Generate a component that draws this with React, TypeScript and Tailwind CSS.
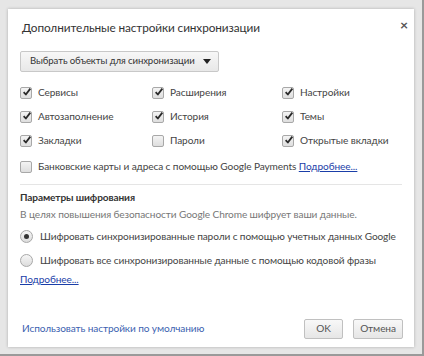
import type { ReactNode } from "react";

function Check({ on }: { on?: boolean }) {
  return (
    <span className="relative inline-flex h-[12px] w-[12px] shrink-0 items-center justify-center rounded-[2px] border border-[#a8a8a8] bg-gradient-to-b from-[#f4f4f4] to-[#dedede]">
      {on && (
        <svg viewBox="0 0 12 12" className="absolute -top-[1px] left-[1px] h-[10px] w-[10px]">
          <path d="M2 6.2 L4.6 9 L10 2" fill="none" stroke="#2a2a2a" strokeWidth="2.2" strokeLinejoin="round" />
        </svg>
      )}
    </span>
  );
}

function Item({ on, children }: { on?: boolean; children: ReactNode }) {
  return (
    <label className="flex items-center gap-[6px] whitespace-nowrap">
      <Check on={on} />
      <span>{children}</span>
    </label>
  );
}

function Radio({ on, children }: { on?: boolean; children: ReactNode }) {
  return (
    <label className="flex items-center gap-[7px] whitespace-nowrap">
      <span className="inline-flex h-[13px] w-[13px] shrink-0 items-center justify-center rounded-full border border-[#a8a8a8] bg-gradient-to-b from-[#f6f6f6] to-[#dcdcdc]">
        {on && <span className="h-[5px] w-[5px] rounded-full bg-[#333]" />}
      </span>
      <span>{children}</span>
    </label>
  );
}

export default function App() {
  return (
    <div
      className="h-[356px] w-[424px] border-r-2 border-b-2 border-[#9a9a9a] bg-[#e6e6e6] pl-[8px] pt-[9px] text-[10.1px] tracking-[-0.1px] text-[#444]"
      style={{ fontFamily: 'Lato, "Noto Sans", sans-serif' }}
    >
      <div className="relative flex h-[338px] w-[406px] flex-col bg-white pl-[12px] pr-[11px] shadow-[0_0_3px_rgba(0,0,0,0.25)]">
        <button className="absolute right-[6px] top-[5px] text-[14px] font-bold text-[#555]">×</button>
        <div className="pt-[11px] pl-[2px] text-[11.8px] leading-[16px] text-[#333]">Дополнительные настройки синхронизации</div>

        <div className="mt-[15px]">
          <button className="flex h-[21px] w-[199px] items-center justify-between whitespace-nowrap rounded-[2px] border border-[#c8c8c8] bg-gradient-to-b from-[#f7f7f7] to-[#e8e8e8] pl-[9px] pr-[7px] text-[9.6px] text-[#333]">
            <span>Выбрать объекты для синхронизации</span>
            <svg viewBox="0 0 8 5" className="h-[5px] w-[8px]"><path d="M0 0 H8 L4 5 Z" fill="#222" /></svg>
          </button>
        </div>

        <div className="mt-[13px] grid grid-cols-[132px_130px_1fr] gap-y-[9px] leading-[15px]">
          <Item on>Сервисы</Item>
          <Item on>Расширения</Item>
          <Item on>Настройки</Item>
          <Item on>Автозаполнение</Item>
          <Item on>История</Item>
          <Item on>Темы</Item>
          <Item on>Закладки</Item>
          <Item>Пароли</Item>
          <Item on>Открытые вкладки</Item>
        </div>

        <div className="mt-[11px] flex items-center gap-[6px] whitespace-nowrap leading-[15px]">
          <Check />
          <span>
            Банковские карты и адреса с помощью Google Payments{" "}
            <a className="text-[#1a3ea8] underline">Подробнее...</a>
          </span>
        </div>

        <div className="mt-[10px] mr-[1px] h-px bg-[#e5e5e5]" />

        <div className="mt-[4px] font-bold leading-[16px] text-[#333]">Параметры шифрования</div>
        <div className="mt-[1px] whitespace-nowrap leading-[16px] text-[#777]">В целях повышения безопасности Google Chrome шифрует ваши данные.</div>

        <div className="mt-[7px] flex flex-col gap-[9px] leading-[15px]">
          <Radio on>Шифровать синхронизированные пароли с помощью учетных данных Google</Radio>
          <Radio>Шифровать все синхронизированные данные с помощью кодовой фразы</Radio>
        </div>
        <a className="mt-[4px] self-start leading-[15px] text-[#1a3ea8] underline">Подробнее...</a>

        <div className="mt-auto mb-[8px] flex items-center justify-between">
          <a className="pl-[2px] text-[#3c5fb0]">Использовать настройки по умолчанию</a>
          <div className="flex gap-[10px]">
            <button className="h-[20px] w-[39px] rounded-[2px] border border-[#c0c0c0] bg-gradient-to-b from-[#f8f8f8] to-[#e6e6e6] text-[#555]">OK</button>
            <button className="h-[20px] w-[50px] rounded-[2px] border border-[#c0c0c0] bg-gradient-to-b from-[#f8f8f8] to-[#e6e6e6] text-[#555]">Отмена</button>
          </div>
        </div>
      </div>
    </div>
  );
}
